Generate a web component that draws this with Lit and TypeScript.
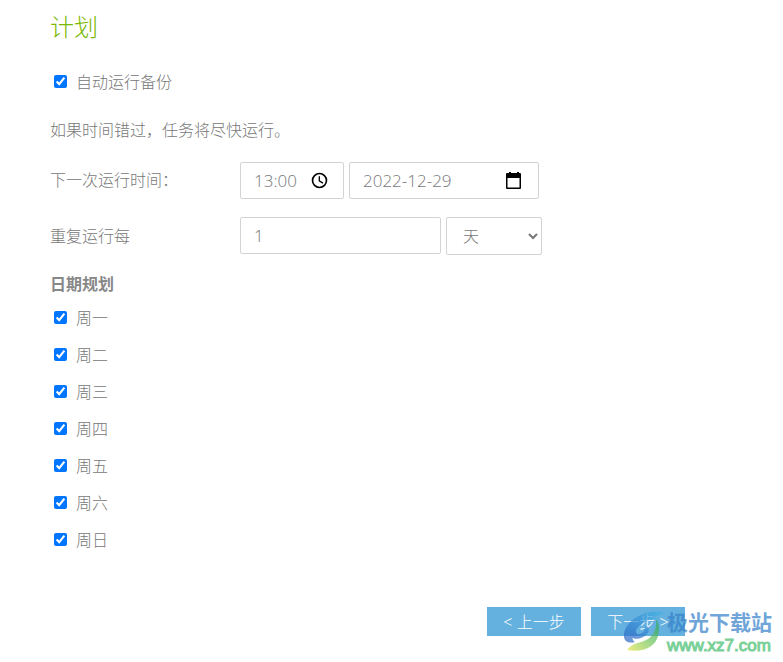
import { LitElement, html, css } from "lit";
import { customElement, state } from "lit/decorators.js";

const DAYS = ["周一", "周二", "周三", "周四", "周五", "周六", "周日"];

@customElement("app-root")
export class AppRoot extends LitElement {
  static styles = css`
    :host {
      display: block;
      position: relative;
      min-height: 100vh;
      box-sizing: border-box;
      padding: 7px 98px 26px 50px;
      background: #fff;
      color: #777;
      font: 300 16px/24px "Open Sans", "Noto Sans CJK SC", sans-serif;
    }
    * {
      box-sizing: border-box;
    }
    h1 {
      margin: 0;
      font-size: 24px;
      line-height: 40px;
      font-weight: 300;
      color: #7ab800;
    }
    .check {
      display: flex;
      align-items: center;
      width: max-content;
      height: 37px;
    }
    .check input {
      width: 13px;
      height: 13px;
      margin: 0 9px 1px 4px;
    }
    .auto {
      margin-top: 16px;
    }
    .note {
      margin: 18px 0 20px;
    }
    .row {
      display: grid;
      grid-template-columns: 190px 1fr;
      align-items: center;
      margin-bottom: 18px;
    }
    .row label {
      padding-bottom: 1px;
    }
    .fields {
      display: flex;
      align-items: flex-start;
      gap: 5px;
    }
    .box {
      display: flex;
      align-items: center;
      height: 37px;
      padding: 0 15px 0 13px;
      border: 1px solid #d3d3d3;
      border-radius: 2px;
      background: #fff;
    }
    .time {
      width: 104px;
    }
    .date {
      width: 190px;
    }
    .count {
      width: 201px;
    }
    .box input {
      flex: 1;
      min-width: 0;
      padding: 0;
      border: 0;
      outline: 0;
      background: none;
      color: inherit;
      font: inherit;
      font-size: 17px;
    }
    .pick {
      flex: none;
      display: flex;
      padding: 0;
      border: 0;
      background: none;
      color: #000;
    }
    select {
      width: 96px;
      height: 38px;
      padding: 0 0 0 12px;
      border: 1px solid #d3d3d3;
      border-radius: 2px;
      background: #fff;
      color: inherit;
      font: inherit;
    }
    fieldset {
      margin: 0;
      padding: 0;
      border: 0;
    }
    legend {
      padding: 0;
      font-weight: 700;
      line-height: 22px;
      color: #888;
      margin-bottom: 4px;
    }
    .actions {
      display: flex;
      justify-content: flex-end;
      gap: 10px;
      margin-top: 49px;
    }
    .actions button {
      width: 94px;
      height: 29px;
      padding: 0;
      border: 0;
      background: #64b0de;
      color: #fff;
      font: inherit;
    }
    .brand {
      position: absolute;
      right: 11px;
      bottom: 6px;
      display: flex;
      align-items: center;
      gap: 1px;
      opacity: 0.7;
      pointer-events: none;
    }
    .brand svg {
      display: block;
    }
    .brand-text {
      display: flex;
      flex-direction: column;
      white-space: nowrap;
    }
    .brand-name {
      font: 700 21px/30px "Noto Sans CJK SC", sans-serif;
      color: #3580c9;
    }
    .brand-url {
      font: 400 17px/20px "Liberation Sans", sans-serif;
      -webkit-text-stroke: 1px currentColor;
      color: #42bd6d;
    }
  `;

  @state() private auto = true;

  render() {
    return html`
      <h1>计划</h1>
      <label class="check auto">
        <input
          type="checkbox"
          .checked=${this.auto}
          @change=${(e: Event) => (this.auto = (e.target as HTMLInputElement).checked)}
        />自动运行备份
      </label>
      <p class="note">如果时间错过，任务将尽快运行。</p>

      <div class="row">
        <label for="time">下一次运行时间：</label>
        <div class="fields">
          <div class="box time">
            <input id="time" type="text" value="13:00" />
            <button class="pick" type="button" aria-label="选择时间">
              <svg width="17" height="17" viewBox="0 0 24 24" fill="currentColor">
                <path
                  d="M12 1a11 11 0 1 0 0 22 11 11 0 0 0 0-22zm0 19.700a8.700 8.700 0 1 1 0-17.400 8.700 8.700 0 0 1 0 17.400zM12.700 6H10.800v7l5.600 3.500 1-1.700-4.700-2.800z"
                />
              </svg>
            </button>
          </div>
          <div class="box date">
            <input type="text" value="2022-12-29" aria-label="日期" />
            <button class="pick" type="button" aria-label="选择日期">
              <svg width="18" height="18" viewBox="0 0 18 18" fill="currentColor">
                <path
                  fill-rule="evenodd"
                  d="M4 0h2v1h6V0h2v1h1q1 0 1 1v14q0 1-1 1H2q-1 0-1-1V2q0-1 1-1h2zM2.500 6v9.500h12V6z"
                />
              </svg>
            </button>
          </div>
        </div>
      </div>

      <div class="row">
        <label for="count">重复运行每</label>
        <div class="fields">
          <div class="box count"><input id="count" type="text" value="1" /></div>
          <select aria-label="单位">
            <option>天</option>
          </select>
        </div>
      </div>

      <fieldset>
        <legend>日期规划</legend>
        ${DAYS.map(
          (d) => html`<label class="check"><input type="checkbox" checked />${d}</label>`
        )}
      </fieldset>

      <div class="actions">
        <button type="button">&lt; 上一步</button>
        <button type="button">下一步 &gt;</button>
      </div>

      <div class="brand">
        <svg width="42" height="42" viewBox="0 0 42 42">
          <defs>
            <linearGradient id="leaf" x1="0" y1="1" x2="1" y2="0">
              <stop offset="0" stop-color="#e8e64a" />
              <stop offset="0.500" stop-color="#72c65c" />
              <stop offset="1" stop-color="#25a35c" />
            </linearGradient>
            <linearGradient id="wave" x1="0" y1="1" x2="1" y2="0">
              <stop offset="0" stop-color="#2a62c4" />
              <stop offset="1" stop-color="#43b8e6" />
            </linearGradient>
          </defs>
          <path
            fill="url(#wave)"
            d="M41 3C22-2 2 10 0 24c-1 7 4 10 11 8C4 28 10 12 41 3z"
          />
          <path
            fill="url(#wave)"
            d="M35 8C17 6 6 16 6 23c0 8 12 7 17 1 4-5 1-9-3-7 2 3-1 7-5 7-5 0-3-6 1-9 4-4 10-6 19-7z"
          />
          <path
            fill="url(#leaf)"
            d="M32 9c1 8-1 15-8 20C18 33 9 32 3 40c16 3 28-3 31-14 2-8 1-13-2-17z"
          />
        </svg>
        <div class="brand-text">
          <span class="brand-name">极光下载站</span>
          <span class="brand-url">www.xz7.com</span>
        </div>
      </div>
    `;
  }
}
